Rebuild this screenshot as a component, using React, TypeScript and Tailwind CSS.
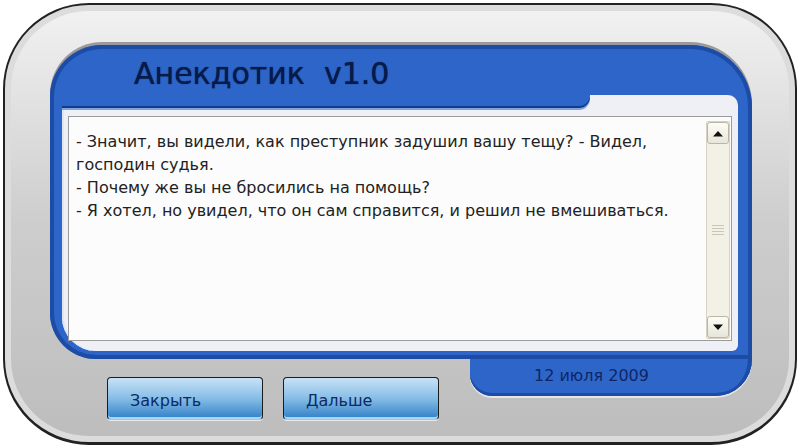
import { ReactNode } from 'react'

const font = { fontFamily: '"DejaVu Sans", Verdana, sans-serif' }

function SkinButton({ children }: { children: ReactNode }) {
  return (
    <button className="w-[156px] h-[43px] rounded-[4px] border border-[#1c1c1c] border-b-[#9cc8ea] bg-gradient-to-b from-[#c8e2f5] via-[#86bde6] to-[#2c7fc6] shadow-[inset_0_-2px_0_#a9d6f5,0_1px_0_#e8e8e8] text-left pl-[22px] pt-[4px] text-[16px] text-[#0c2a66]">
      {children}
    </button>
  )
}

function Arrow({ up }: { up?: boolean }) {
  return (
    <div className="h-[22px] border border-[#b9b6a6] rounded-[3px] bg-gradient-to-b from-[#fdfdf7] to-[#e8e6da] flex items-center justify-center">
      <svg width="12" height="7" viewBox="0 0 12 7">
        <path d={up ? 'M1 6.5 L6 1 L11 6.5 Z' : 'M1 0.5 L6 6 L11 0.5 Z'} fill="#111" />
      </svg>
    </div>
  )
}

export default function App() {
  return (
    <div className="w-[800px] h-[448px] bg-white p-[3px] overflow-hidden" style={font}>
      {/* outer gray frame */}
      <div className="h-[442px] rounded-[86px] border-2 border-[#222] border-b-[3px] bg-gradient-to-b from-[#f2f2f2] via-[#cdcdcd] to-[#bdbdbd] shadow-[inset_0_0_0_6px_#dcdcdc] pt-[40px] pl-[45px] pr-[43px] flex flex-col">
        {/* blue panel */}
        <div className="h-[314px] rounded-tl-[52px] rounded-tr-[62px] rounded-bl-[46px] bg-[#2d66c8] shadow-[0_-3px_0_#9a9a9a,inset_0_0_0_4px_#1c4ca6] pl-[12px] pr-[14px] pb-[8px] flex flex-col">
          <div className="h-[50px] pl-[72px] flex items-center pt-[8px]">
            <span className="text-[30px] leading-none text-[#071a4a] whitespace-pre [text-shadow:0_0_1px_#071a4a]">Анекдотик  v1.0</span>
          </div>
          {/* light content area */}
          <div className="flex-1 rounded-tr-[10px] rounded-bl-[34px] rounded-br-[6px] bg-[#eef0f6] shadow-[inset_2px_0_0_#dfe6f4] flex flex-col">
            <div className="h-[11px] w-[528px] bg-[#2d66c8] rounded-br-[12px] shadow-[0_2px_0_#123a8a,0_4px_0_#7fa3e0]" />
            <div className="flex-1 px-[6px] pt-[10px] pb-[10px]">
              <div className="h-full border border-[#9b9b9b] bg-[#fcfcfc] flex">
                <div className="flex-1 pl-[7px] pt-[13px] text-[16px] leading-[23px] text-[#222] whitespace-nowrap">
                  <div>- Значит, вы видели, как преступник задушил вашу тещу? - Видел,</div>
                  <div>господин судья.</div>
                  <div>- Почему же вы не бросились на помощь?</div>
                  <div>- Я хотел, но увидел, что он сам справится, и решил не вмешиваться.</div>
                </div>
                <div className="w-[24px] mt-[4px] mb-[1px] mr-[1px] bg-[#f3f1e6] border border-[#d6d3c4] rounded-[2px] flex flex-col">
                  <Arrow up />
                  <div className="flex-1 flex flex-col items-center justify-center gap-[2px]">
                    <div className="w-[12px] h-px bg-[#c9c6b6]" />
                    <div className="w-[12px] h-px bg-[#c9c6b6]" />
                    <div className="w-[12px] h-px bg-[#c9c6b6]" />
                    <div className="w-[12px] h-px bg-[#c9c6b6]" />
                  </div>
                  <Arrow />
                </div>
              </div>
            </div>
          </div>
        </div>
        {/* bottom row */}
        <div className="flex items-start">
          <div className="flex gap-[20px] pl-[57px] pt-[18px]">
            <SkinButton>Закрыть</SkinButton>
            <SkinButton>Дальше</SkinButton>
          </div>
          <div className="ml-auto w-[282px] h-[37px] bg-[#2d66c8] rounded-bl-[26px] rounded-br-[44px] shadow-[inset_0_-3px_0_#1c4ca6,inset_-4px_0_0_#1c4ca6,0_2px_0_#e6e6e6] flex items-center pl-[64px] pb-[4px]">
            <span className="text-[16px] text-[#0f2566]">12 июля 2009</span>
          </div>
        </div>
      </div>
    </div>
  )
}
